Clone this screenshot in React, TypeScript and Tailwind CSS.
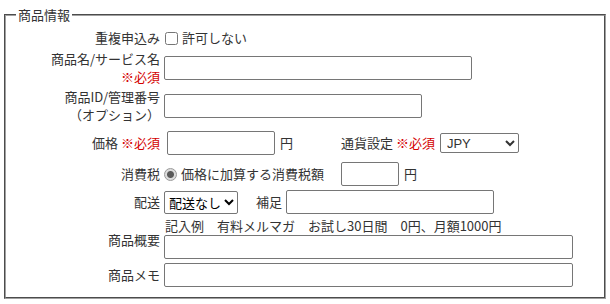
import React from 'react';

const font = { fontFamily: '"Noto Sans CJK JP", "Noto Sans", sans-serif' };

function Req() {
  return <span className="text-[#d40000]">※必須</span>;
}

function TextBox({ w }: { w: string }) {
  return <input type="text" className={`${w} h-[24px] border border-[#767676] rounded-[2px] bg-white px-[2px] text-[13px] outline-none`} />;
}

export default function App() {
  return (
    <div className="w-[610px] h-[304px] bg-white text-[13px] text-[#333] pt-[6px]" style={font}>
      <fieldset className="ml-[4px] w-[602px] border-2 border-[#a0a0a0] [border-style:groove] pb-[10px]">
        <legend className="ml-[10px] px-[2px] leading-[17px]">商品情報</legend>

        {/* 重複申込み */}
        <div className="flex items-center h-[20px] mt-[5px]">
          <div className="w-[154px] text-right leading-[18px]">重複申込み</div>
          <label className="flex items-center ml-[4px]">
            <input type="checkbox" className="w-[13px] h-[13px] m-0 ml-[1px]" />
            <span className="ml-[4px] leading-[18px]">許可しない</span>
          </label>
        </div>

        {/* 商品名 */}
        <div className="flex items-center h-[36px] mt-[2px]">
          <div className="w-[154px] text-right leading-[18px]">
            <div>商品名/サービス名</div>
            <div><Req /></div>
          </div>
          <div className="ml-[4px]"><TextBox w="w-[308px]" /></div>
        </div>

        {/* 商品ID */}
        <div className="flex items-center h-[36px] mt-[2px]">
          <div className="w-[154px] text-right leading-[18px]">
            <div>商品ID/管理番号</div>
            <div>（オプション）</div>
          </div>
          <div className="ml-[4px]"><TextBox w="w-[258px]" /></div>
        </div>

        {/* 価格 / 通貨設定 */}
        <div className="flex items-center h-[24px] mt-[7px]">
          <div className="w-[154px] text-right leading-[18px]">価格 <Req /></div>
          <div className="ml-[4px] w-[177px] flex items-center">
            <div className="ml-[3px]"><TextBox w="w-[108px]" /></div>
            <span className="ml-[5px]">円</span>
          </div>
          <span className="leading-[18px]">通貨設定 <Req /></span>
          <select className="ml-[5px] w-[79px] h-[20px] border border-[#767676] rounded-[2px] bg-white text-[13px] pl-[2px]" style={{ fontFamily: '"Liberation Sans", "Noto Sans CJK JP", sans-serif' }} defaultValue="JPY">
            <option value="JPY">JPY</option>
            <option value="USD">USD</option>
          </select>
        </div>

        {/* 消費税 */}
        <div className="flex items-center h-[24px] mt-[7px]">
          <div className="w-[154px] text-right leading-[18px]">消費税</div>
          <div className="ml-[4px] w-[177px] flex items-center">
            <input
              type="radio"
              readOnly
              checked
              className="appearance-none w-[13px] h-[13px] m-0 rounded-full border border-[#9a9a9a] bg-[radial-gradient(circle,#5a5a5a_0_3px,#dcdcdc_4px)]"
            />
            <span className="ml-[4px] leading-[18px]">価格に加算する消費税額</span>
          </div>
          <TextBox w="w-[58px]" />
          <span className="ml-[5px]">円</span>
        </div>

        {/* 配送 */}
        <div className="flex items-center h-[24px] mt-[4px]">
          <div className="w-[154px] text-right leading-[18px]">配送</div>
          <select className="ml-[4px] w-[74px] h-[23px] border border-[#767676] rounded-[2px] bg-white text-[13px] text-black" defaultValue="none">
            <option value="none">配送なし</option>
            <option value="yes">配送あり</option>
          </select>
          <span className="ml-[18px] leading-[18px]">補足</span>
          <div className="ml-[4px]"><TextBox w="w-[208px]" /></div>
        </div>

        {/* 商品概要 */}
        <div className="flex h-[42px] mt-[3px]">
          <div className="w-[154px] text-right leading-[18px] self-end mb-[10px]">商品概要</div>
          <div className="ml-[4px] flex flex-col">
            <div className="leading-[18px] pl-[1px]">記入例　有料メルマガ　お試し30日間　0円、月額1000円</div>
            <TextBox w="w-[409px]" />
          </div>
        </div>

        {/* 商品メモ */}
        <div className="flex items-center h-[24px] mt-[4px]">
          <div className="w-[154px] text-right leading-[18px]">商品メモ</div>
          <div className="ml-[4px]"><TextBox w="w-[409px]" /></div>
        </div>
      </fieldset>
    </div>
  );
}
